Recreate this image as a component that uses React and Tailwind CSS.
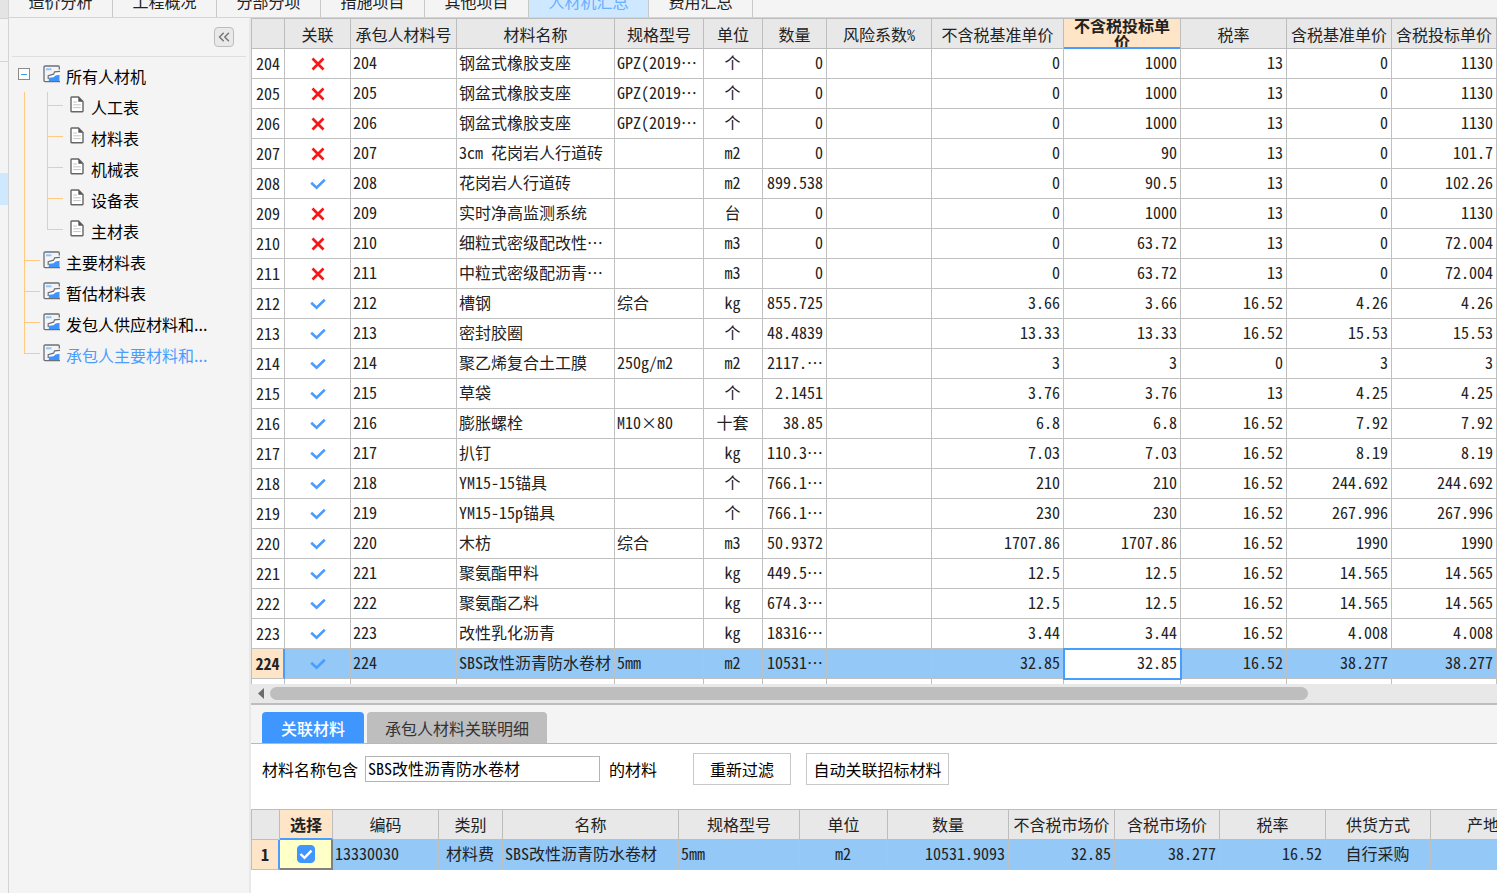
import { useState } from 'react';
import { ChevronsLeft } from 'lucide-react';
import clsx from 'clsx';

const TABS = [
  { name: '造价分析' },
  { name: '工程概况' },
  { name: '分部分项' },
  { name: '措施项目' },
  { name: '其他项目' },
  { name: '人材机汇总', active: true },
  { name: '费用汇总' },
];

// depth 0 = root, 1 = first level, 2 = tables below the root
const TREE = [
  { name: '所有人材机', depth: 0 },
  { name: '人工表', depth: 2 },
  { name: '材料表', depth: 2 },
  { name: '机械表', depth: 2 },
  { name: '设备表', depth: 2 },
  { name: '主材表', depth: 2, last: true },
  { name: '主要材料表', depth: 1 },
  { name: '暂估材料表', depth: 1 },
  { name: '发包人供应材料和...', depth: 1 },
  { name: '承包人主要材料和...', depth: 1, last: true, active: true },
];

const COLUMNS = [
  { title: '', width: 'w-[34px]' },
  { title: '关联', width: 'w-[66px]' },
  { title: '承包人材料号', width: 'w-[106px]', align: 'text-left' },
  { title: '材料名称', width: 'w-[158px]', align: 'text-left' },
  { title: '规格型号', width: 'w-[89px]', align: 'text-left' },
  { title: '单位', width: 'w-[59px]', align: 'text-center' },
  { title: '数量', width: 'w-[64px]', align: 'text-right' },
  { title: '风险系数%', width: 'w-[105px]', align: 'text-right' },
  { title: '不含税基准单价', width: 'w-[132px]', align: 'text-right' },
  { title: '不含税投标单价', width: 'w-[117px]', align: 'text-right' },
  { title: '税率', width: 'w-[106px]', align: 'text-right' },
  { title: '含税基准单价', width: 'w-[105px]', align: 'text-right' },
  { title: '含税投标单价', width: 'w-auto', align: 'text-right' },
];

// [no, linked, name, spec, unit, qty, base, bid, tax rate, base incl. tax, bid incl. tax]
const MATERIALS = [
  [204, false, '钢盆式橡胶支座', 'GPZ(2019…', '个', '0', '0', '1000', '13', '0', '1130'],
  [205, false, '钢盆式橡胶支座', 'GPZ(2019…', '个', '0', '0', '1000', '13', '0', '1130'],
  [206, false, '钢盆式橡胶支座', 'GPZ(2019…', '个', '0', '0', '1000', '13', '0', '1130'],
  [207, false, '3cm 花岗岩人行道砖', '', 'm2', '0', '0', '90', '13', '0', '101.7'],
  [208, true, '花岗岩人行道砖', '', 'm2', '899.538', '0', '90.5', '13', '0', '102.26'],
  [209, false, '实时净高监测系统', '', '台', '0', '0', '1000', '13', '0', '1130'],
  [210, false, '细粒式密级配改性…', '', 'm3', '0', '0', '63.72', '13', '0', '72.004'],
  [211, false, '中粒式密级配沥青…', '', 'm3', '0', '0', '63.72', '13', '0', '72.004'],
  [212, true, '槽钢', '综合', 'kg', '855.725', '3.66', '3.66', '16.52', '4.26', '4.26'],
  [213, true, '密封胶圈', '', '个', '48.4839', '13.33', '13.33', '16.52', '15.53', '15.53'],
  [214, true, '聚乙烯复合土工膜', '250g/m2', 'm2', '2117.…', '3', '3', '0', '3', '3'],
  [215, true, '草袋', '', '个', '2.1451', '3.76', '3.76', '13', '4.25', '4.25'],
  [216, true, '膨胀螺栓', 'M10×80', '十套', '38.85', '6.8', '6.8', '16.52', '7.92', '7.92'],
  [217, true, '扒钉', '', 'kg', '110.3…', '7.03', '7.03', '16.52', '8.19', '8.19'],
  [218, true, 'YM15-15锚具', '', '个', '766.1…', '210', '210', '16.52', '244.692', '244.692'],
  [219, true, 'YM15-15p锚具', '', '个', '766.1…', '230', '230', '16.52', '267.996', '267.996'],
  [220, true, '木枋', '综合', 'm3', '50.9372', '1707.86', '1707.86', '16.52', '1990', '1990'],
  [221, true, '聚氨酯甲料', '', 'kg', '449.5…', '12.5', '12.5', '16.52', '14.565', '14.565'],
  [222, true, '聚氨酯乙料', '', 'kg', '674.3…', '12.5', '12.5', '16.52', '14.565', '14.565'],
  [223, true, '改性乳化沥青', '', 'kg', '18316…', '3.44', '3.44', '16.52', '4.008', '4.008'],
  [224, true, 'SBS改性沥青防水卷材', '5mm', 'm2', '10531…', '32.85', '32.85', '16.52', '38.277', '38.277'],
];

const LINKED_COLUMNS = [
  { title: '', width: 'w-[29px]' },
  { title: '选择', width: 'w-[53px]' },
  { title: '编码', width: 'w-[106px]', align: 'text-left', value: '13330030' },
  { title: '类别', width: 'w-[64px]', align: 'text-center', value: '材料费' },
  { title: '名称', width: 'w-[176px]', align: 'text-left', value: 'SBS改性沥青防水卷材' },
  { title: '规格型号', width: 'w-[121px]', align: 'text-left', value: '5mm' },
  { title: '单位', width: 'w-[88px]', align: 'text-center', value: 'm2' },
  { title: '数量', width: 'w-[121px]', align: 'text-right', value: '10531.9093' },
  { title: '不含税市场价', width: 'w-[106px]', align: 'text-right', value: '32.85' },
  { title: '含税市场价', width: 'w-[105px]', align: 'text-right', value: '38.277' },
  { title: '税率', width: 'w-[106px]', align: 'text-right', value: '16.52' },
  { title: '供货方式', width: 'w-[105px]', align: 'text-center', value: '自行采购' },
  { title: '产地', width: 'w-[105px]', align: 'text-left', value: '' },
];

const SELECTED = 224;
const BID_COLUMN = 9;

const cellBase = 'border-r border-b border-[#c0c0c0] pt-0 pb-[3px] pl-[2px] pr-[3px] whitespace-nowrap overflow-hidden';
const headBase = 'border-r border-b border-t border-[#bdbdbd] p-0 font-normal whitespace-nowrap overflow-hidden';

function ReportIcon() {
  return (
    <svg className="w-[18px] h-[18px] shrink-0" viewBox="0 0 18 18" fill="none">
      <path d="M6 11.5L10.5 9.8L12.5 8L16.5 6.2V16H6Z" fill="#fff" />
      <path d="M5.8 16V12.8L10.5 12.2L12.5 10.4L16.5 9.8V16Z" fill="#3d94ff" />
      <path d="M3 4.3H8.5" stroke="#8ec5ff" strokeWidth="2" />
      <path d="M17 6.3L11.6 6.8L10.6 9.2L5.2 10.6V14" stroke="#6b6f75" strokeWidth="1.2" />
      <path d="M17 16.6H2.2Q1 16.6 1 15.4V2.2Q1 1 2.2 1H15.2Q16.3 1 16.3 2.2V4.6" stroke="#6b6f75" strokeWidth="1.3" />
    </svg>
  );
}

function PageIcon() {
  return (
    <svg className="w-[14px] h-[17px] shrink-0" viewBox="0 0 14 17" fill="none">
      <path d="M1 1.5Q1 1 1.5 1H8.5L13 5.5V15Q13 15.7 12.4 15.7H1.6Q1 15.7 1 15Z" fill="#fff" stroke="#666" strokeWidth="1.4" />
      <path d="M8.3 1V5.7H13Z" fill="#555" />
      <path d="M3.2 6H7M3.2 8.8H10.8M3.2 11.6H10.8" stroke="#c4c4c4" />
    </svg>
  );
}

function LinkMark({ linked }) {
  return linked ? (
    <svg className="mx-auto w-4 h-3" viewBox="0 0 16 12" fill="none" aria-label="已关联">
      <path d="M1.2 4.8L6.6 9.8L14.8 1.8" stroke="#4b9dfd" strokeWidth="2.6" />
    </svg>
  ) : (
    <svg className="mx-auto w-[14px] h-[14px]" viewBox="0 0 14 14" fill="none" aria-label="未关联">
      <path d="M1.5 1.5L12.5 12.5M12.5 1.5L1.5 12.5" stroke="#f81616" strokeWidth="2.7" />
    </svg>
  );
}

// Elbow line in front of a tree item
function Branch({ last }) {
  return (
    <span className="flex flex-col w-4 h-[31px] shrink-0">
      <span className="h-[14px] border-l border-b border-[#ffca80]" />
      {!last && <span className="flex-1 border-l border-[#ffca80]" />}
    </span>
  );
}

function Sidebar() {
  return (
    <aside className="w-[242px] shrink-0 border-r-2 border-[#e8e8e8] bg-[#f4f4f4]">
      <div className="mx-[3px] h-[39px] flex items-center justify-end pr-3 border-b border-[#dedede]">
        <button
          type="button"
          aria-label="收起"
          className="w-5 h-5 flex items-center justify-center rounded-sm border border-[#bcbcbc] bg-[#e9e9e9] text-[#777]"
        >
          <ChevronsLeft className="w-[18px] h-[18px]" strokeWidth={2} />
        </button>
      </div>
      <ul className="pt-1 text-base leading-[31px] text-black">
        {TREE.map((item) => (
          <li key={item.name} className="h-[31px] flex pl-[15px]">
            {item.depth === 0 && (
              <button
                type="button"
                aria-label="折叠"
                className="-ml-[6px] mt-[7px] mr-[10px] w-3 h-3 flex items-center justify-center border border-[#8a8a8a] bg-white"
              >
                <span className="w-[6px] h-px bg-[#3aa0e8]" />
              </button>
            )}
            {item.depth === 1 && <Branch last={item.last} />}
            {item.depth === 2 && (
              <>
                <span className="w-[23px] border-l border-[#ffca80] shrink-0" />
                <Branch last={item.last} />
              </>
            )}
            <a
              href="#"
              className={clsx(
                'flex items-start whitespace-nowrap',
                item.depth === 2 ? 'pl-[7px] gap-[7px]' : 'pl-[3px] gap-[5px]',
                item.active && 'text-[#4b9dfd]'
              )}
            >
              <span className="pt-1">{item.depth === 2 ? <PageIcon /> : <ReportIcon />}</span>
              {item.name}
            </a>
          </li>
        ))}
      </ul>
    </aside>
  );
}

function MaterialTable() {
  return (
    <table className="w-full table-fixed border-separate border-spacing-0 bg-white text-base leading-5 text-[#222]">
      <colgroup>
        {COLUMNS.map((col, i) => (
          <col key={i} className={col.width} />
        ))}
      </colgroup>
      <thead>
        <tr className="h-[31px] bg-[#e8e8e8]">
          {COLUMNS.map((col, i) =>
            i === BID_COLUMN ? (
              <th key={i} className="p-0 border-t border-r border-[#bdbdbd] bg-[#ffe5c8]">
                <div className="h-[30px] px-2 flex items-center overflow-hidden border-b-2 border-[#4b9dfd] leading-4 font-bold">
                  {col.title}
                </div>
              </th>
            ) : (
              <th key={i} className={clsx(headBase, i === 0 && 'border-l')}>
                {col.title}
              </th>
            )
          )}
        </tr>
      </thead>
      <tbody>
        {MATERIALS.map(([no, linked, ...values]) => {
          const selected = no === SELECTED;
          return (
            <tr key={no} className={clsx('h-[30px]', selected && 'bg-[#93c8f7]')}>
              <th
                className={clsx(
                  'border-l border-b border-[#c0c0c0] p-0 pb-px text-center',
                  selected ? 'border-r-2 border-r-[#4b9dfd] bg-[#ffe5c8] font-bold' : 'border-r font-normal'
                )}
              >
                {no}
              </th>
              <td className="border-r border-b border-[#c0c0c0] p-0">
                <LinkMark linked={linked} />
              </td>
              {[no, values[0], values[1], values[2], values[3], '', ...values.slice(4)].map((value, i) => {
                const col = i + 2;
                return (
                  <td
                    key={col}
                    className={clsx(
                      cellBase,
                      COLUMNS[col].align,
                      selected && col === BID_COLUMN && 'bg-white outline-2 -outline-offset-1 outline-[#4b9dfd]'
                    )}
                  >
                    {value}
                  </td>
                );
              })}
            </tr>
          );
        })}
        <tr className="h-[5px]" aria-hidden="true">
          {COLUMNS.map((col, i) => (
            <td key={i} className={clsx('p-0 border-r border-[#c0c0c0]', i === 0 && 'border-l')} />
          ))}
        </tr>
      </tbody>
    </table>
  );
}

function ScrollBar() {
  return (
    <div className="h-[21px] flex items-center bg-[#e8e8e8] border-b-2 border-[#bdbdbd]">
      <button type="button" aria-label="向左滚动" className="w-[19px] h-full flex items-center justify-center">
        <svg className="w-[6px] h-[11px]" viewBox="0 0 6 11">
          <path d="M6 0V11L0 5.5Z" fill="#6b6b6b" />
        </svg>
      </button>
      <div className="w-5/6 h-[13px] rounded-full bg-[#bebebe]" />
    </div>
  );
}

function FilterForm() {
  const [keyword, setKeyword] = useState('SBS改性沥青防水卷材');

  return (
    <form
      className="flex items-center pl-[11px] pt-[9px] pb-6 text-base text-black whitespace-nowrap"
      onSubmit={(e) => e.preventDefault()}
    >
      <label htmlFor="keyword">材料名称包含</label>
      <input
        id="keyword"
        type="text"
        value={keyword}
        onChange={(e) => setKeyword(e.target.value)}
        className="ml-[7px] w-[235px] h-[26px] px-[2px] pb-[2px] border border-[#b4b4b4] bg-white outline-none"
      />
      <span className="ml-[9px]">的材料</span>
      <button type="submit" className="ml-9 w-[98px] h-8 border border-[#c8c8c8] bg-white">
        重新过滤
      </button>
      <button type="button" className="ml-[15px] w-[143px] h-8 border border-[#c8c8c8] bg-white">
        自动关联招标材料
      </button>
    </form>
  );
}

function LinkedTable() {
  const [checked, setChecked] = useState(true);

  return (
    <table className="w-full table-fixed border-separate border-spacing-0 text-base leading-5 text-[#222]">
      <colgroup>
        {LINKED_COLUMNS.map((col, i) => (
          <col key={i} className={col.width} />
        ))}
      </colgroup>
      <thead>
        <tr className="h-[31px] bg-[#e8e8e8]">
          {LINKED_COLUMNS.map((col, i) =>
            i === 1 ? (
              <th key={i} className="p-0 border-t border-r border-b-2 border-[#bdbdbd] border-b-[#4b9dfd] bg-[#ffe5c8] font-bold">
                {col.title}
              </th>
            ) : (
              <th key={i} className={clsx(headBase, 'pb-px', i === 0 && 'border-l')}>
                {col.title}
              </th>
            )
          )}
        </tr>
      </thead>
      <tbody>
        <tr className="h-[30px] bg-[#93c8f7]">
          <th className="p-0 pb-px border-l border-b border-[#c0c0c0] border-r-2 border-r-[#4b9dfd] bg-[#ffe5c8] font-bold">1</th>
          <td className="p-0 border-r-2 border-b-2 border-[#808080] bg-[#ffffc8]">
            <label className="relative mx-auto w-[18px] h-[18px] block">
              <input
                type="checkbox"
                aria-label="选择"
                checked={checked}
                onChange={(e) => setChecked(e.target.checked)}
                className="block w-[18px] h-[18px] appearance-none rounded-sm border border-[#4096ff] bg-white checked:bg-[#4096ff]"
              />
              {checked && (
                <svg className="absolute inset-0 w-[18px] h-[18px] pointer-events-none" viewBox="0 0 18 18" fill="none">
                  <path d="M3.5 9L7.5 12.8L14.5 5.6" stroke="#fff" strokeWidth="2.4" />
                </svg>
              )}
            </label>
          </td>
          {LINKED_COLUMNS.slice(2).map((col) => (
            <td key={col.title} className={clsx(cellBase, col.align)}>
              {col.value}
            </td>
          ))}
        </tr>
      </tbody>
    </table>
  );
}

export default function App() {
  return (
    <div
      lang="zh-CN"
      className="min-h-screen flex overflow-hidden bg-[#f4f4f4] font-['Noto_Sans_CJK_SC',sans-serif]"
    >
      {/* Edge of the outer navigation */}
      <div className="w-[9px] shrink-0 flex flex-col border-r border-[#d4d4d4]">
        <div className="h-[19px] bg-[#e4e4e4] border-b border-[#d4d4d4]" />
        <div className="h-[43px] border-b border-[#d4d4d4]" />
        <div className="mt-[111px] h-8 bg-[#cde8ff]" />
      </div>

      <div className="flex-1 min-w-0 flex flex-col">
        <nav className="h-[18px] flex items-end overflow-hidden border-b border-[#d4d4d4]">
          {TABS.map((tab) => (
            <button
              key={tab.name}
              type="button"
              className={clsx(
                'h-8 shrink-0 border-r border-[#c8c8c8] text-base',
                tab.active ? 'w-[120px] bg-[#cde8ff] text-[#6aaeff]' : 'w-[104px] text-[#222]'
              )}
            >
              {tab.name}
            </button>
          ))}
        </nav>

        <div className="flex-1 flex min-h-0">
          <Sidebar />
          <main className="flex-1 min-w-0 flex flex-col overflow-hidden bg-white">
            <div className="font-['Noto_Sans_Mono_CJK_SC','Noto_Sans_CJK_SC',monospace]">
              <MaterialTable />
            </div>
            <ScrollBar />
            <div className="h-[39px] flex items-end gap-[3px] pl-[11px] bg-[#f4f4f4] border-b border-[#b8b8b8] text-base">
              <button type="button" className="w-[102px] h-[31px] rounded-t-sm bg-[#4096ff] text-white font-medium">
                关联材料
              </button>
              <button type="button" className="w-[180px] h-[31px] rounded-t-sm bg-[#bebebe] text-[#333]">
                承包人材料关联明细
              </button>
            </div>
            <div className="font-['Noto_Sans_Mono_CJK_SC','Noto_Sans_CJK_SC',monospace]">
              <FilterForm />
              <LinkedTable />
            </div>
          </main>
        </div>
      </div>
    </div>
  );
}
